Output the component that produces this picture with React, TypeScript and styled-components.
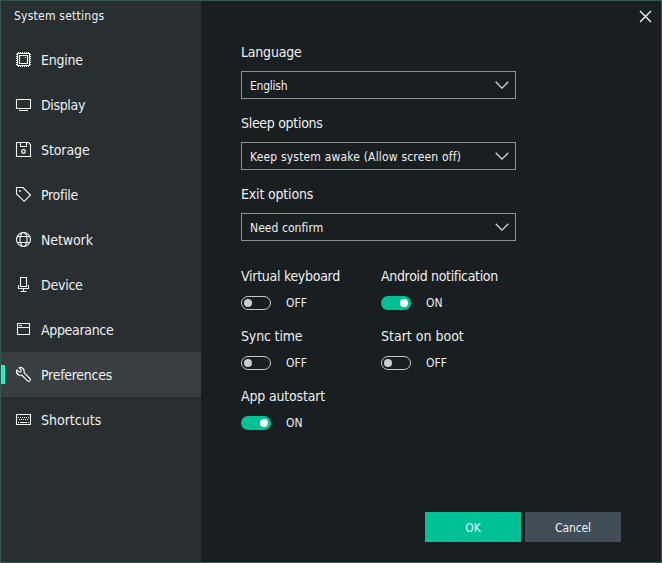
import React, { useState } from 'react';
import styled, { createGlobalStyle } from 'styled-components';

const GlobalStyle = createGlobalStyle`
  * { box-sizing: border-box; }
  body { margin: 0; background: #191e20; }
  button { border: 0; padding: 0; background: none; color: inherit; font: inherit; cursor: pointer; }
`;

const Window = styled.div`
  display: grid;
  grid-template-columns: 200px 1fr;
  width: 662px;
  height: 563px;
  border: 1px solid #355853;
  background: #191e20;
  color: #eef0f0;
  font-family: 'DejaVu Sans Condensed', 'Noto Sans', sans-serif;
  font-size: 14px;
  overflow: hidden;
`;

const Text = styled.span<{ $track?: number }>`
  letter-spacing: ${(p) => p.$track ?? 0}px;
  white-space: nowrap;
`;

const Sidebar = styled.aside`
  display: flex;
  flex-direction: column;
  background: #292e30;
`;

const Title = styled.h1`
  margin: 0;
  height: 36px;
  padding: 7px 0 0 13px;
  font-size: 12px;
  font-weight: 400;
  line-height: 16px;
`;

const NavItem = styled.button<{ $active: boolean }>`
  display: flex;
  align-items: center;
  height: 45px;
  text-align: left;
  background: ${(p) => (p.$active ? '#393e40' : 'transparent')};
`;

const Marker = styled.i<{ $active: boolean }>`
  width: 4px;
  height: 19px;
  margin-right: 11px;
  background: ${(p) => (p.$active ? '#1df5c4' : 'transparent')};
`;

const NavIcon = styled.svg`
  width: 15px;
  height: 15px;
  margin-right: 10px;
  overflow: visible;
  fill: none;
  stroke: #f4f6f6;
  stroke-width: 1.1;
`;

const Main = styled.main`
  display: flex;
  flex-direction: column;
  padding: 0 40px 20px;
`;

const TitleBar = styled.header`
  display: flex;
  justify-content: flex-end;
  height: 41px;
  margin-right: -31px;
  padding-top: 9px;
`;

const CloseButton = styled.button`
  width: 13px;
  height: 13px;
  svg { display: block; }
`;

const Field = styled.div`
  height: 71px;
`;

const Label = styled.div`
  height: 29px;
  line-height: 20px;
`;

const Select = styled.button`
  display: flex;
  align-items: center;
  justify-content: space-between;
  width: 275px;
  height: 28px;
  padding: 1px 6px 0 8px;
  border: 1px solid #8c9091;
  font-size: 12px;
  svg { margin-bottom: 1px; }
`;

const SwitchGrid = styled.div`
  display: grid;
  grid-template-columns: 140px 140px;
  grid-auto-rows: 60px;
  margin-top: 11px;
`;

const SwitchLabel = styled.div`
  height: 30px;
  line-height: 20px;
`;

const SwitchRow = styled.div`
  display: flex;
  align-items: center;
  gap: 15px;
  height: 14px;
  padding-top: 0;
  font-size: 12px;
`;

const Track = styled.button<{ $on: boolean }>`
  display: flex;
  align-items: center;
  justify-content: ${(p) => (p.$on ? 'flex-end' : 'flex-start')};
  width: 30px;
  height: 14px;
  padding: 0 ${(p) => (p.$on ? 3 : 2)}px;
  border: ${(p) => (p.$on ? '0' : '1px solid #c6c9ca')};
  border-radius: 7px;
  background: ${(p) => (p.$on ? '#03c197' : 'transparent')};
`;

const Knob = styled.i<{ $on: boolean }>`
  width: 8px;
  height: 8px;
  border-radius: 50%;
  background: ${(p) => (p.$on ? '#ffffff' : '#cbcecf')};
`;

const Actions = styled.footer`
  display: flex;
  justify-content: flex-end;
  gap: 4px;
  margin-top: auto;
`;

const ActionButton = styled.button<{ $primary?: boolean }>`
  width: 96px;
  height: 30px;
  padding-top: 1px;
  background: ${(p) => (p.$primary ? '#03c197' : '#3f4e58')};
  font-size: 12px;
`;

const nav: { name: string; track: number; icon: React.ReactNode }[] = [
  {
    name: 'Engine',
    track: -0.25,
    icon: (
      <>
        <path d="M1.5 1.5h12v12h-12zM3.5 3.5h8v8h-8z" />
        <path d="M2 .5h12M2 14.5h12M.5 2v12M14.5 2v12" strokeDasharray="1 1" />
        <path d="M9 5.5h1" />
      </>
    ),
  },
  { name: 'Display', track: -0.35, icon: <path d="M.5 2.5h14v9H.5zM3 13.5h9" /> },
  {
    name: 'Storage',
    track: -0.1,
    icon: (
      <>
        <path d="M.5.5h12l2 2v12H.5zM4.500.5v4h6v-4" />
        <circle cx="7.5" cy="9.5" r="1.8" strokeWidth="1.3" />
      </>
    ),
  },
  {
    name: 'Profile',
    track: -0.3,
    icon: (
      <>
        <path d="M.5.5h6.500l7.500 7.500-6.300 6.300L.5 7z" />
        <circle cx="4" cy="4" r=".9" fill="#f4f6f6" stroke="none" />
      </>
    ),
  },
  {
    name: 'Network',
    track: -0.1,
    icon: (
      <>
        <circle cx="7.5" cy="7.5" r="7" />
        <ellipse cx="7.5" cy="7.5" rx="3.5" ry="7" />
        <path d="M1 4.500h13M1 10.500h13" />
      </>
    ),
  },
  {
    name: 'Device',
    track: -0.25,
    icon: <path d="M4.500.5h6v9h-6zM2.500 8v3.500h10V8M7.500 11.500v3M4.500 14.500h6" />,
  },
  {
    name: 'Appearance',
    track: -0.33,
    icon: <path d="M1.500 1.500h12v11h-12zM1.500 5.500h12M3 3.500h3" />,
  },
  {
    name: 'Preferences',
    track: -0.28,
    icon: (
      <path
        d="M2.900.7 5.300 3.200 4.800 4.700 3.300 5.200.8 2.900C.2 4.700.7 6.700 2.200 7.700c1.100.7 2.300.7 3.400.3l5.900 5.900c.7.7 1.700.7 2.400 0s.7-1.700 0-2.400L8 5.600C8.500 4 8 2.200 6.700 1.200 5.600.4 4.200.2 2.900.7z"
        strokeLinejoin="round"
      />
    ),
  },
  {
    name: 'Shortcuts',
    track: 0,
    icon: (
      <>
        <path d="M.5 2.500h14v10H.5z" />
        <path d="M2 5.500h11M3 7.500h10" strokeDasharray="1 1" />
        <path d="M2 10.500h1M4 10.500h7M12 10.500h1" />
      </>
    ),
  },
];

const fields = [
  { label: 'Language', track: -0.2, value: 'English', valueTrack: -0.25 },
  { label: 'Sleep options', track: -0.3, value: 'Keep system awake (Allow screen off)', valueTrack: 0.18 },
  { label: 'Exit options', track: -0.17, value: 'Need confirm', valueTrack: 0.06 },
];

const switches = [
  { label: 'Virtual keyboard', track: -0.28, on: false },
  { label: 'Android notification', track: -0.33, on: true },
  { label: 'Sync time', track: -0.15, on: false },
  { label: 'Start on boot', track: 0, on: false },
  { label: 'App autostart', track: -0.17, on: true },
];

export default function App() {
  const [active, setActive] = useState('Preferences');
  const [states, setStates] = useState(switches.map((s) => s.on));

  return (
    <>
      <GlobalStyle />
      <Window>
        <Sidebar>
          <Title>
            <Text $track={0.24}>System settings</Text>
          </Title>
          {nav.map((item) => (
            <NavItem key={item.name} $active={item.name === active} onClick={() => setActive(item.name)}>
              <Marker $active={item.name === active} />
              <NavIcon viewBox="0 0 15 15">{item.icon}</NavIcon>
              <Text $track={item.track}>{item.name}</Text>
            </NavItem>
          ))}
        </Sidebar>
        <Main>
          <TitleBar>
            <CloseButton aria-label="Close">
              <svg width="13" height="13" fill="none" stroke="#fff" strokeWidth="1.3">
                <path d="M1 1l11 11M12 1L1 12" />
              </svg>
            </CloseButton>
          </TitleBar>
          {fields.map((f) => (
            <Field key={f.label}>
              <Label>
                <Text $track={f.track}>{f.label}</Text>
              </Label>
              <Select>
                <Text $track={f.valueTrack}>{f.value}</Text>
                <svg width="14" height="8" fill="none" stroke="#d5d8d9" strokeWidth="1.3">
                  <path d="M.7.8L7 7.1 13.3.8" />
                </svg>
              </Select>
            </Field>
          ))}
          <SwitchGrid>
            {switches.map((s, i) => (
              <div key={s.label}>
                <SwitchLabel>
                  <Text $track={s.track}>{s.label}</Text>
                </SwitchLabel>
                <SwitchRow>
                  <Track
                    $on={states[i]}
                    aria-label={s.label}
                    onClick={() => setStates(states.map((v, j) => (j === i ? !v : v)))}
                  >
                    <Knob $on={states[i]} />
                  </Track>
                  <Text>{states[i] ? 'ON' : 'OFF'}</Text>
                </SwitchRow>
              </div>
            ))}
          </SwitchGrid>
          <Actions>
            <ActionButton $primary>OK</ActionButton>
            <ActionButton>
              <Text $track={-0.1}>Cancel</Text>
            </ActionButton>
          </Actions>
        </Main>
      </Window>
    </>
  );
}
